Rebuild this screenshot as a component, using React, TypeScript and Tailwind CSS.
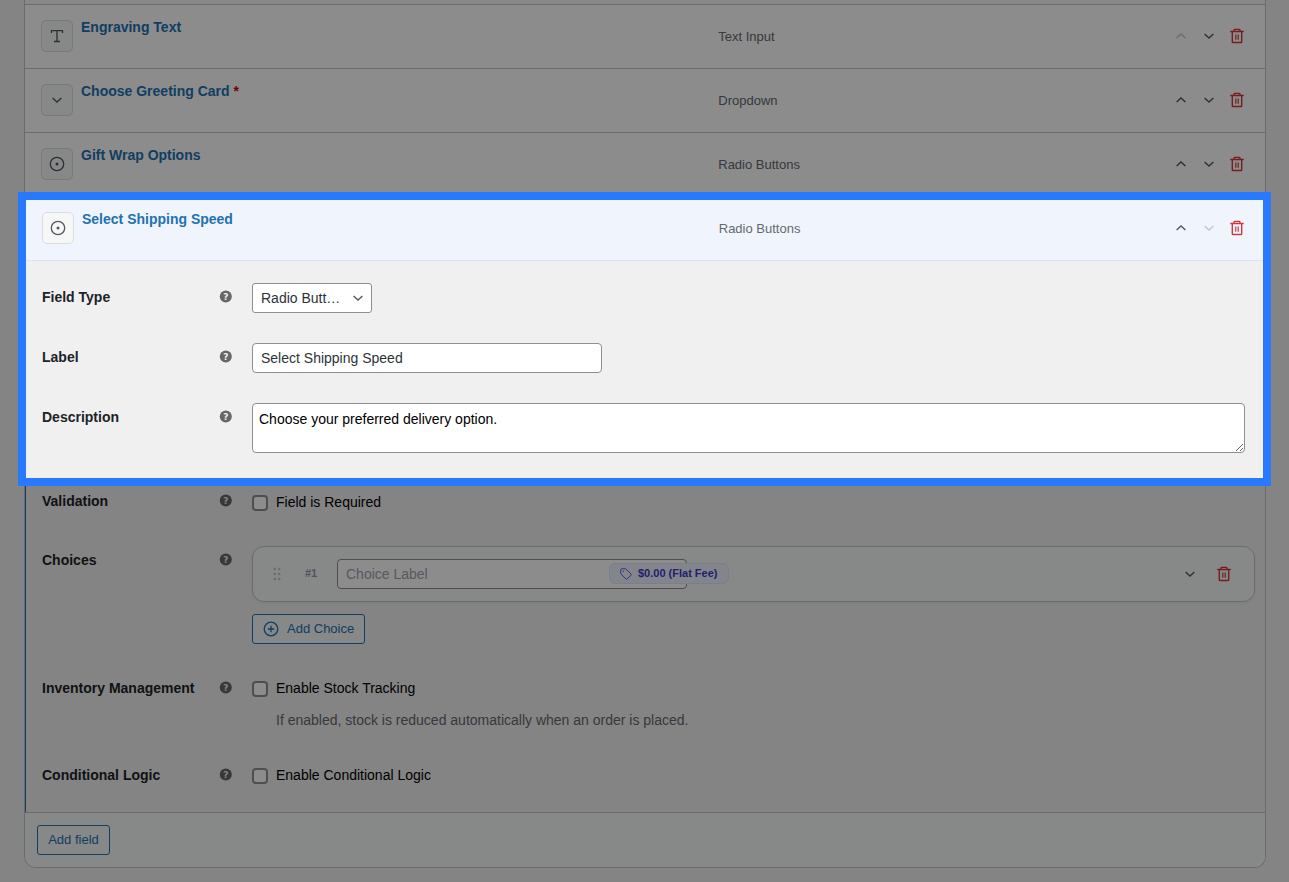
import type { ReactNode } from "react";

type Field = {
  label: string;
  type: string;
  icon: "text" | "dropdown" | "radio";
  required?: boolean;
  first?: boolean;
};

const fields: Field[] = [
  { label: "Engraving Text", type: "Text Input", icon: "text", first: true },
  { label: "Choose Greeting Card", type: "Dropdown", icon: "dropdown", required: true },
  { label: "Gift Wrap Options", type: "Radio Buttons", icon: "radio" }
];

function Chevron({ up }: { up?: boolean }) {
  return (
    <svg viewBox="0 0 16 16" className="h-4 w-4" fill="none" stroke="currentColor" strokeWidth="1.35">
      <path d={up ? "M3.6 10.1 8 5.9l4.4 4.2" : "M3.6 5.9 8 10.1l4.4-4.2"} />
    </svg>
  );
}

function Trash() {
  return (
    <svg viewBox="0 0 16 16" className="h-4 w-4" fill="none" stroke="currentColor" strokeWidth="1.4">
      <path d="M1.3 3.5h13.4M5.1 3.3V2.1a.7.7 0 0 1 .7-.7h4.4a.7.7 0 0 1 .7.7v1.2M3.3 3.5v10.2c0 .5.3.8.8.8h7.8c.5 0 .8-.3.8-.8V3.5" />
      <path d="M6.8 6.5v5.3M9.200 6.500v5.300" strokeWidth="1.2" />
    </svg>
  );
}

function FieldIcon({ icon }: { icon: Field["icon"] }) {
  return (
    <span className="flex h-8 w-8 shrink-0 items-center justify-center rounded-[5px] border border-[#dcdcde] bg-[#f6f7f7] text-[#50575e]">
      {icon === "dropdown" ? (
        <Chevron />
      ) : (
        <svg viewBox="0 0 16 16" className="h-4 w-4" fill="none" stroke="currentColor" strokeWidth="1.3">
          {icon === "text" && <path d="M2.5 5V2.6h11V5M8 2.6v10.9M5 13.5h6" />}
          {icon === "radio" && (
            <>
              <circle cx="8" cy="8" r="6.7" />
              <circle cx="8" cy="8" r="1.5" fill="currentColor" stroke="none" />
            </>
          )}
        </svg>
      )}
    </span>
  );
}

function RowActions({ first, last }: { first?: boolean; last?: boolean }) {
  return (
    <div className="mr-4 flex gap-1">
      <button className={`flex h-6 w-6 items-center justify-center ${first ? "text-[#c3c4c7]" : "text-[#50575e]"}`}>
        <Chevron up />
      </button>
      <button className={`flex h-6 w-6 items-center justify-center ${last ? "text-[#c3c4c7]" : "text-[#50575e]"}`}>
        <Chevron />
      </button>
      <button className="flex h-6 w-6 items-center justify-center text-[#d63638]">
        <Trash />
      </button>
    </div>
  );
}

function RowContent({ field, last }: { field: Field; last?: boolean }) {
  return (
    <>
      <FieldIcon icon={field.icon} />
      <div className="ml-2 mb-[18px] flex-1 text-sm leading-[18px] font-bold text-[#2271b1]">
        {field.label}
        {field.required && <span className="text-[#d60000]"> *</span>}
      </div>
      <div className={`pt-px text-[13px] text-[#646970] ${last ? "w-[450.25px]" : "w-[450.75px]"}`}>{field.type}</div>
      <RowActions first={field.first} last={last} />
    </>
  );
}

function HelpTip() {
  return (
    <svg viewBox="0 0 14 14" className="mt-[7px] mr-[19px] h-[14px] w-[14px] shrink-0">
      <circle cx="6.8" cy="6.5" r="6" fill="#666" />
      <text x="6.8" y="9.9" textAnchor="middle" fill="#f0f0f1" className="font-['DejaVu_Sans',sans-serif] text-[9px] font-bold">
        ?
      </text>
    </svg>
  );
}

function Setting({ label, className, children }: { label: string; className: string; children: ReactNode }) {
  return (
    <div className={`flex items-start ${className}`}>
      <div className="w-[177px] shrink-0 pt-[5px] text-sm leading-[18px] font-bold text-[#1d2327]">{label}</div>
      <HelpTip />
      <div className="min-w-0 flex-1">{children}</div>
    </div>
  );
}

function Check({ children }: { children: ReactNode }) {
  return (
    <label className="flex items-center gap-2 pt-[5px] text-sm leading-[18px] text-black">
      <span className="mt-px h-4 w-4 rounded-[4px] border-2 border-[#8c8f94] bg-white" />
      {children}
    </label>
  );
}

function ChoiceRow() {
  return (
    <div className="flex h-14 w-[1003px] items-center rounded-xl border border-[#c3c4c7] bg-[#f6f8f7] pl-5 shadow-[0_1px_3px_rgba(0,0,0,0.06)]">
      <svg viewBox="0 0 8 14" className="h-[14px] w-2 text-[#c3c4c7]" fill="currentColor">
        {[2, 7, 12].map((y) => (
          <g key={y}>
            <circle cx="1.8" cy={y} r="1.3" />
            <circle cx="6.2" cy={y} r="1.3" />
          </g>
        ))}
      </svg>
      <span className="mb-0.5 ml-6 w-8 text-[11px] font-bold text-[#949aab]">#1</span>
      <div className="h-[30px] w-[350px] rounded border border-[#8c8f94] bg-white px-2 text-sm leading-7 text-[#9ca3af]">
        Choice Label
      </div>
      <div className="relative mb-[2px] -ml-[78px] flex h-[21px] w-[120px] items-center rounded-md border border-[#e0e7ff] bg-[#eef2ff] pl-[10px] text-[11px] font-bold whitespace-nowrap text-[#4338ca]">
        <svg viewBox="0 0 12 12" className="mt-px mr-[6px] h-3 w-3 opacity-80" fill="none" stroke="currentColor" strokeWidth="1">
          <path d="M.8 1.8v3.6c0 .3.1.5.3.7l4.8 4.8c.4.4 1 .4 1.4 0l3.6-3.6c.4-.4.4-1 0-1.4L6.1 1.1A1 1 0 0 0 5.4.8H1.8a1 1 0 0 0-1 1Z" />
          <circle cx="3.4" cy="3.4" r=".65" fill="currentColor" stroke="none" />
        </svg>
        $0.00 (Flat Fee)
      </div>
      <div className="mr-[18px] ml-auto flex gap-[10px]">
        <button className="flex h-6 w-6 items-center justify-center text-[#50575e]">
          <Chevron />
        </button>
        <button className="flex h-6 w-6 items-center justify-center text-[#d63638]">
          <Trash />
        </button>
      </div>
    </div>
  );
}

export default function App() {
  return (
    <div className="relative h-[882px] w-[1289px] overflow-hidden bg-[#f0f0f1] px-6 font-['Liberation_Sans',Arial,sans-serif]">
      <div className="w-[1242px] overflow-hidden rounded-b-xl border-x border-b border-[#c3c4c7] bg-white">
        <div className="h-1 bg-[#f6f8f7]" />
        {fields.map((field) => (
          <div key={field.label} className="flex h-16 items-center border-t border-[#c3c4c7] pb-px pl-4">
            <RowContent field={field} />
          </div>
        ))}

        <div className="border-t border-l border-t-[#c3c4c7] border-l-[#2271b1]">
          <div className="flex h-16 items-center border-b border-[#dce4ee] bg-[#f0f5fd] pb-px pl-4">
            <RowContent field={{ label: "Select Shipping Speed", type: "Radio Buttons", icon: "radio" }} last />
          </div>
          <div className="h-[551px] bg-[#f0f0f0] pt-[22px] pl-4">
            <Setting label="Field Type" className="h-[60px]">
              <div className="flex h-[30px] w-[120px] items-center justify-between rounded-[3px] border border-[#8c8f94] bg-white pr-[5px] pl-2 text-sm text-[#2c3338]">
                Radio Butt…
                <span className="text-[#50575e]">
                  <Chevron />
                </span>
              </div>
            </Setting>
            <Setting label="Label" className="h-[60px]">
              <div className="h-[30px] w-[350px] rounded border border-[#8c8f94] bg-white px-2 text-sm leading-7 text-[#2c3338]">
                Select Shipping Speed
              </div>
            </Setting>
            <Setting label="Description" className="h-[84px]">
              <textarea
                className="block h-[50px] w-[993px] resize rounded border border-[#8c8f94] bg-white px-[6px] py-[5px] text-sm leading-5 text-black"
                defaultValue="Choose your preferred delivery option."
              />
            </Setting>
            <Setting label="Validation" className="h-[59px]">
              <div className="pt-px">
                <Check>Field is Required</Check>
              </div>
            </Setting>
            <Setting label="Choices" className="h-[128px]">
              <ChoiceRow />
              <button className="mt-3 flex h-[30px] w-[113px] items-center rounded-[3px] border border-[#2271b1] bg-[#f6f7f7] pl-[10px] text-[13px] text-[#2271b1]">
                <svg viewBox="0 0 16 16" className="mr-2 h-4 w-4" fill="none" stroke="currentColor" strokeWidth="1.3">
                  <circle cx="8" cy="8" r="6.8" />
                  <path d="M8 4.8v6.4M4.8 8h6.4" />
                </svg>
                Add Choice
              </button>
            </Setting>
            <Setting label="Inventory Management" className="h-[87px]">
              <Check>Enable Stock Tracking</Check>
              <p className="mt-[14px] ml-6 text-sm leading-[18px] text-[#646970]">
                If enabled, stock is reduced automatically when an order is placed.
              </p>
            </Setting>
            <Setting label="Conditional Logic" className="h-10">
              <Check>Enable Conditional Logic</Check>
            </Setting>
          </div>
        </div>

        <div className="h-[55px] border-t border-[#c3c4c7] bg-[#f6f8f7] pt-3 pl-3">
          <button className="h-[30px] w-[73px] rounded-[3px] border border-[#2271b1] bg-[#f6f7f7] text-[13px] text-[#2271b1]">
            Add field
          </button>
        </div>
      </div>

      {/* spotlight around the open field, everything else is dimmed by its shadow */}
      <div className="pointer-events-none absolute top-48 left-[18px] h-[294px] w-[1253px] border-8 border-[#2979ff] shadow-[0_0_0_1400px_rgba(0,0,0,0.45)]" />
    </div>
  );
}
